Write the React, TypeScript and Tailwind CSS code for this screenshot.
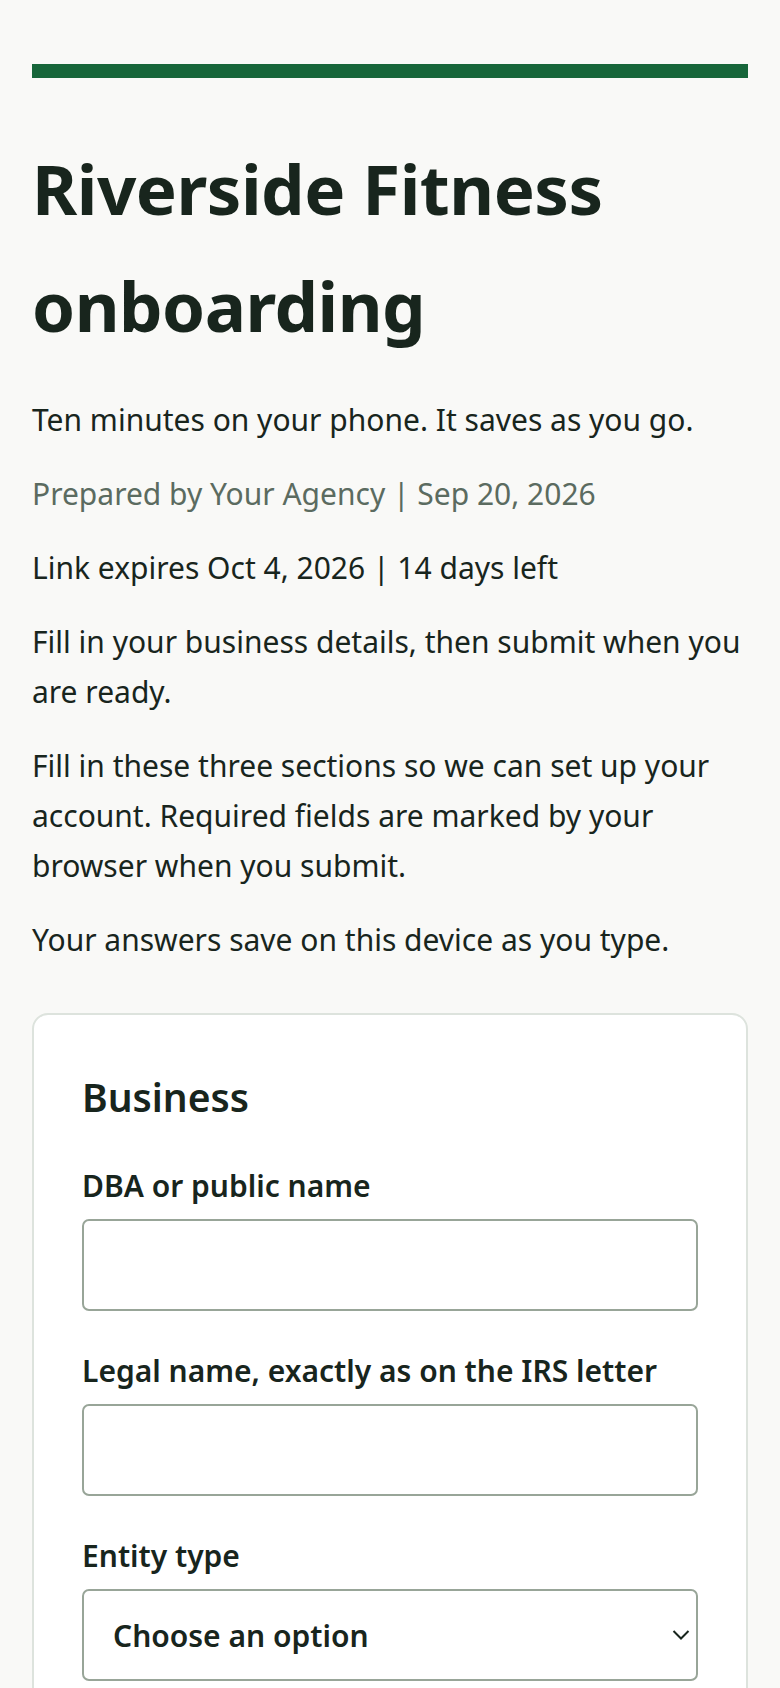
import React from "react";

const font = { fontFamily: '"Noto Sans", "Open Sans", sans-serif' };

function Field({ label, children }: { label: string; children: React.ReactNode }) {
  return (
    <label className="flex flex-col gap-[11px]">
      <span className="text-[30px] leading-[45px] font-semibold text-[#18251d]">{label}</span>
      {children}
    </label>
  );
}

export default function App() {
  return (
    <div className="min-h-screen bg-[#f9f9f7] text-[#18251d]" style={font}>
      <div className="px-[32px] pt-[64px] pb-[48px]">
        <div className="h-[14px] bg-[#17663a]" />

        <h1 className="mt-[52px] text-[69px] leading-[117px] font-bold tracking-[-0.5px] text-[#18251d]">
          Riverside Fitness onboarding
        </h1>

        <div className="mt-[31px] flex flex-col gap-[24px] text-[30px] leading-[50px]">
          <p>Ten minutes on your phone. It saves as you go.</p>
          <p className="text-[#5b6b60]">Prepared by Your Agency | Sep 20, 2026</p>
          <p>Link expires Oct 4, 2026 | 14 days left</p>
          <p>Fill in your business details, then submit when you are ready.</p>
          <p>
            Fill in these three sections so we can set up your account. Required fields are marked by your
            browser when you submit.
          </p>
          <p>Your answers save on this device as you type.</p>
        </div>

        <form className="mt-[48px] rounded-[16px] border-2 border-[#dde3dd] bg-white px-[48px] pt-[58px] pb-[48px]">
          <h2 className="text-[39px] leading-[48px] font-semibold">Business</h2>

          <div className="mt-[42px] flex flex-col gap-[37px]">
            <Field label="DBA or public name">
              <input
                type="text"
                className="h-[92px] w-full rounded-[7px] border-2 border-[#98a598] bg-white px-[24px] text-[30px] outline-none"
              />
            </Field>
            <Field label="Legal name, exactly as on the IRS letter">
              <input
                type="text"
                className="h-[92px] w-full rounded-[7px] border-2 border-[#98a598] bg-white px-[24px] text-[30px] outline-none"
              />
            </Field>
            <Field label="Entity type">
              <div className="relative">
                <select
                  defaultValue=""
                  className="h-[92px] w-full appearance-none rounded-[7px] border-2 border-[#98a598] bg-white pl-[29px] pr-[56px] text-[30px] font-semibold text-[#18251d] outline-none"
                  style={font}
                >
                  <option value="">Choose an option</option>
                  <option>Sole proprietor</option>
                  <option>LLC</option>
                  <option>Corporation</option>
                  <option>Partnership</option>
                  <option>Nonprofit</option>
                </select>
                <svg
                  className="pointer-events-none absolute right-[8px] top-1/2 -translate-y-1/2"
                  width="18"
                  height="11"
                  viewBox="0 0 18 11"
                  fill="none"
                >
                  <path d="M1.5 1.5 L9 9 L16.5 1.5" stroke="#18251d" strokeWidth="2" />
                </svg>
              </div>
            </Field>
          </div>
        </form>
      </div>
    </div>
  );
}
